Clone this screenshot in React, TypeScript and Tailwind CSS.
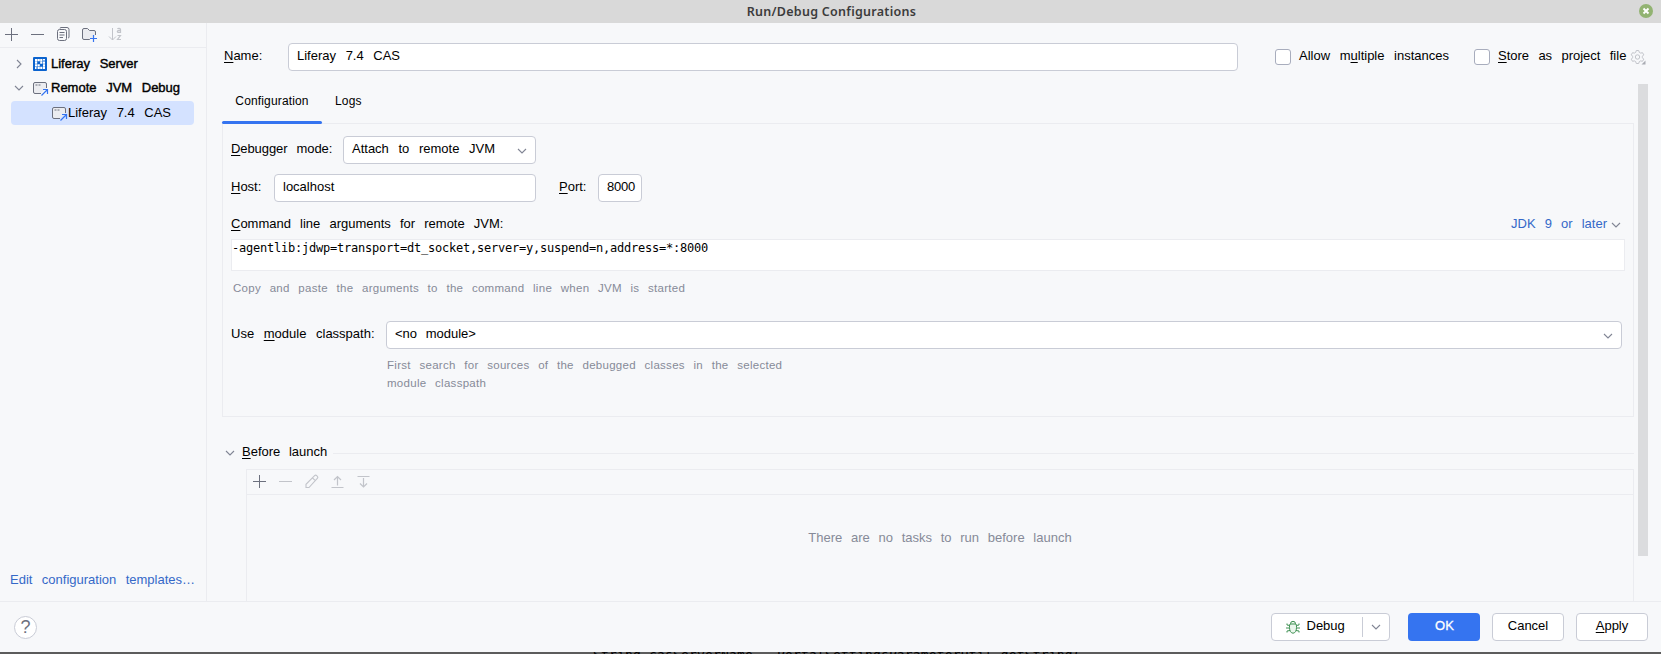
import React from "react";

const U = ({ children }: { children: React.ReactNode }) => (
  <span className="underline decoration-1 underline-offset-2">{children}</span>
);

type IconProps = { className?: string };

const Chevron = ({ className = "" }: IconProps) => (
  <svg viewBox="0 0 10 6" className={"h-[6px] w-[10px] shrink-0 fill-none stroke-[#818594] " + className}>
    <path d="M1 1 5 5 9 1" strokeWidth="1.1" />
  </svg>
);

const Plus = () => (
  <svg viewBox="0 0 16 16" className="size-4 shrink-0 overflow-visible stroke-[#6c707e]">
    <path d="M8.5 2v13M2 8.5h13" strokeWidth="1" />
  </svg>
);

const Minus = ({ className = "stroke-[#6c707e]" }: IconProps) => (
  <svg viewBox="0 0 16 16" className={"size-4 shrink-0 " + className}>
    <path d="M2 8.5h13" strokeWidth="1" />
  </svg>
);

const Copy = () => (
  <svg viewBox="0 0 16 16" className="size-4 shrink-0 fill-none stroke-[#6c707e]">
    <path d="M5 2.5A1 1 0 0 1 6 1.500h6a2 2 0 0 1 2 2v7.500a1 1 0 0 1-1 1" />
    <rect x="2.500" y="3.500" width="9" height="11" rx="2" />
    <path d="M4.500 6.500h5M4.500 9h5M4.500 11.500h3.500" />
  </svg>
);

const NewFolder = () => (
  <svg viewBox="0 0 17 16" className="h-4 w-[17px] shrink-0 fill-none overflow-visible">
    <path d="M9 13.500H3A1.500 1.500 0 0 1 1.500 12V4A1.500 1.500 0 0 1 3 2.500h3.500l2 2H13A1.500 1.500 0 0 1 14.500 6v3" fill="#ebecf0" stroke="#6c707e" />
    <path d="M9 13.500V10h5.500" stroke="#ebecf0" />
    <path d="M12.500 9v7M9 12.500h7" stroke="#3574f0" strokeWidth="1.200" />
  </svg>
);

const SortAZ = () => (
  <svg viewBox="0 0 16 16" className="size-4 shrink-0 fill-none stroke-[#c2c4ca]">
    <path d="M4.500 2v12M1 10.500 4.500 14 8 10.500" />
    <path d="M9.500 3c.6-1 3-1 3 .6V7M12.500 4.500c-2-.2-3.300.2-3.200 1.200.1 1.100 2.500 1 3.200-.2M9.500 9.500h3l-3 4h3.500" strokeWidth="1.200" />
  </svg>
);

const Remote = () => (
  <svg viewBox="0 0 17 16" className="h-4 w-[17px] shrink-0 fill-none overflow-visible">
    <path d="M8 13.500H3A1.500 1.500 0 0 1 1.500 12V4A1.500 1.500 0 0 1 3 2.500h10A1.500 1.500 0 0 1 14.500 4v4L8.500 13.500z" fill="#ebecf0" />
    <path d="M9 13.500H3A1.500 1.500 0 0 1 1.500 12V4A1.500 1.500 0 0 1 3 2.500h10A1.500 1.500 0 0 1 14.500 4v4" stroke="#6c707e" />
    <path d="M3.500 5h2M6.500 5h2" stroke="#6c707e" />
    <path d="M9.500 15.500l6-6M11 9.500h4.500V14" stroke="#3574f0" strokeWidth="1.200" />
  </svg>
);

const Liferay = () => (
  <svg viewBox="0 0 14 14" className="size-[14px] shrink-0">
    <rect width="14" height="14" rx="1" fill="#0b63ce" />
    <path
      fill="#fff"
      d="M2 2h2.200v2.200H2zM4.600 2h2.200v2.200H4.600zM7.200 2h2.200v2.200H7.200zM2 4.600h2.200v2.200H2zM2 7.200h2.200v2.200H2zM4.600 7.200h2.200v2.200H4.600zM7.200 4.600h2.200v2.200H7.200zM10 2h2v1.500h-2zM10 4.600h2v2.200h-2zM10 7.200h2v2.200h-2zM2 10h1.500v2H2zM4.600 10h2.200v2H4.600zM7.200 9.800h2.200V12H7.200zM10 9.800h2V12h-2z"
    />
  </svg>
);

const Gear = () => (
  <svg viewBox="0 0 16 16" className="size-4 shrink-0 fill-none stroke-[#c2c4ca]">
    <path d="M6.300 1.500h2.400l.6 1.900 1.300.7 1.900-.4 1.200 2.100-1.300 1.500v1.400l1.300 1.500-1.200 2.100-1.900-.4-1.300.7-.6 1.900H6.300l-.6-1.900-1.300-.7-1.900.4-1.200-2.100L2.600 8.700V7.300L1.300 5.800l1.200-2.100 1.900.4 1.300-.7z" />
    <circle cx="7.500" cy="8" r="2.200" />
    <path d="M15.500 11.500v4h-4z" fill="#aaacb3" stroke="none" />
  </svg>
);

const Pencil = () => (
  <svg viewBox="0 0 16 16" className="size-4 shrink-0 fill-none stroke-[#c2c4ca]">
    <path d="M3 14.500v-3.200l8.600-8.600a1.500 1.500 0 0 1 2.100 0l.6.600a1.500 1.500 0 0 1 0 2.100L6 14.500zM9.500 4.800l3 3" strokeWidth="1.100" />
  </svg>
);

const MoveUp = () => (
  <svg viewBox="0 0 16 16" className="size-4 shrink-0 fill-none stroke-[#c2c4ca]">
    <path d="M8.500 12.500V3.500M5 7 8.500 3.500 12 7M2.500 14.500h12" strokeWidth="1.200" />
  </svg>
);

const MoveDown = () => (
  <svg viewBox="0 0 16 16" className="size-4 shrink-0 fill-none stroke-[#c2c4ca]">
    <path d="M8.500 5v9M5 10.500 8.500 14l3.500-3.500M2.500 3.500h12" strokeWidth="1.200" />
  </svg>
);

const Bug = () => (
  <svg viewBox="0 0 16 16" className="size-4 shrink-0 fill-none stroke-[#3f9153]">
    <path d="M5.500 4.800a2.500 2.500 0 0 1 5 0M5 5h6a7 7 0 0 1 .5 3.500C11.500 12 10 14.200 8 14.200S4.500 12 4.500 8.500A7 7 0 0 1 5 5z" fill="#eaf6ec" />
    <path d="M4.500 9H1M11.500 9H15M4.700 6.500 2 6V4.500M11.300 6.500 14 6V4.500M5 11.500l-3 .5v1.500M11 11.500l3 .5v1.500" />
  </svg>
);

const field = "flex h-7 items-center rounded-[4px] border border-[#c9ccd6] bg-white";
const button = "flex h-7 items-center justify-center rounded-[4px] border border-[#c9ccd6] bg-white pb-[3px]";
const hint = "text-[11.5px] leading-[18px] tracking-[0.28px] text-[#868a98] [word-spacing:5.2px]";

function Sidebar() {
  return (
    <aside className="flex w-[207px] shrink-0 flex-col border-r border-[#ebecf0]">
      <div className="flex h-[25px] items-center gap-[10px] border-b border-[#ebecf0] pb-[2px] pl-[3px]">
        <Plus />
        <Minus />
        <Copy />
        <NewFolder />
        <SortAZ />
      </div>
      <div className="flex flex-col pt-[5px]">
        <div className="flex h-6 items-center pb-[2px] pl-[14px]">
          <Chevron className="-rotate-90" />
          <span className="ml-[9px] flex"><Liferay /></span>
          <span className="ml-[4px] [-webkit-text-stroke:0.4px_black] [word-spacing:6px]">Liferay Server</span>
        </div>
        <div className="flex h-6 items-center pb-[2px] pl-[14px]">
          <Chevron />
          <span className="ml-[8px] flex"><Remote /></span>
          <span className="ml-[2px] [-webkit-text-stroke:0.4px_black] [word-spacing:6px]">Remote JVM Debug</span>
        </div>
        <div className="ml-[11px] flex h-6 w-[183px] items-center rounded-[4px] bg-[#d4e2ff] pl-[40px]">
          <Remote />
          <span className="[word-spacing:6px]">Liferay 7.4 CAS</span>
        </div>
      </div>
      <a className="mt-auto mb-[12px] pl-[10px] text-[#3568c8] [word-spacing:5.8px]">Edit configuration templates…</a>
    </aside>
  );
}

function NameRow() {
  return (
    <div className="flex h-[61px] items-center pt-[6px] pl-[17px]">
      <label className="w-[64px] pb-[2px]"><U>N</U>ame:</label>
      <div className={field + " w-[950px] pb-[2px] pl-2 [word-spacing:6px]"}>Liferay 7.4 CAS</div>
      <span className="ml-[37px] size-4 rounded-[3px] border border-[#a8adbd] bg-white" />
      <span className="ml-[8px] w-[151px] pb-[2px] [word-spacing:6px]">Allow m<U>u</U>ltiple instances</span>
      <span className="ml-[24px] size-4 rounded-[3px] border border-[#a8adbd] bg-white" />
      <span className="ml-[8px] w-[129px] pb-[2px] [word-spacing:5.7px]"><U>S</U>tore as project file</span>
      <span className="ml-[3px] flex"><Gear /></span>
    </div>
  );
}

function ConfigurationPanel() {
  return (
    <section className="flex h-[294px] shrink-0 flex-col border border-[#ebecf0] pl-2">
      <div className="mt-[12px] flex h-7 items-center">
        <label className="w-[112px] pb-[2px] tracking-[-0.08px]"><U>D</U>ebugger mode:</label>
        <div className={field + " w-[193px] justify-between pr-[8px] pl-2"}>
          <span className="pb-[2px] [word-spacing:6px]">Attach to remote JVM</span>
          <Chevron className="mt-px" />
        </div>
      </div>
      <div className="mt-[10px] flex h-7 items-center">
        <label className="w-[43px] pb-[2px]"><U>H</U>ost:</label>
        <div className={field + " w-[262px] pb-[2px] pl-2"}>localhost</div>
        <label className="ml-[23px] w-[39px] pb-[2px]"><U>P</U>ort:</label>
        <div className={field + " w-[44px] pb-[2px] pl-2 tracking-[-0.2px]"}>8000</div>
      </div>
      <div className="mt-[10px] flex h-6 items-center justify-between pr-[12px]">
        <label><U>C</U>ommand line arguments for remote JVM:</label>
        <span className="flex items-center gap-[4px] text-[#3568c8]">JDK 9 or later<Chevron className="mt-[2px]" /></span>
      </div>
      <div className="mt-[3px] h-8 w-[1394px] border border-[#ebecf0] bg-white font-['DejaVu_Sans_Mono',monospace] text-[12px] leading-[17px] tracking-[-0.224px]">
        -agentlib:jdwp=transport=dt_socket,server=y,suspend=n,address=*:8000
      </div>
      <p className={hint + " mt-[8px] pl-[2px]"}>
        Copy and paste the arguments to the command line when JVM is started
      </p>
      <div className="mt-[24px] flex h-7 items-center">
        <label className="w-[155px] pb-[2px] [word-spacing:6px]">Use <U>m</U>odule classpath:</label>
        <div className={field + " w-[1236px] justify-between pr-[8px] pl-2"}>
          <span className="pb-[2px] [word-spacing:5px]">&lt;no module&gt;</span>
          <Chevron className="mt-px" />
        </div>
      </div>
      <p className={hint + " mt-[7px] ml-[156px] w-[410px]"}>
        First search for sources of the debugged classes in the selected<br />module classpath
      </p>
    </section>
  );
}

function BeforeLaunch() {
  return (
    <section className="mt-[24px] flex min-h-0 grow flex-col">
      <div className="flex h-6 shrink-0 items-center pl-[3px]">
        <Chevron />
        <span className="ml-[7px] pb-[2px] [word-spacing:5px]"><U>B</U>efore launch</span>
        <span className="ml-[6px] h-px grow bg-[#ebecf0]" />
      </div>
      <div className="mt-[4px] ml-[24px] flex grow flex-col border border-b-0 border-[#ebecf0]">
        <div className="flex h-[25px] items-center gap-[10px] border-b border-[#ebecf0] pb-[2px] pl-[4px]">
          <Plus />
          <Minus className="stroke-[#c2c4ca]" />
          <Pencil />
          <MoveUp />
          <MoveDown />
        </div>
        <p className="pt-[34px] text-center text-[#868a98] [word-spacing:5.1px]">There are no tasks to run before launch</p>
      </div>
    </section>
  );
}

export default function App() {
  return (
    <div className="flex h-[654px] w-[1661px] flex-col overflow-hidden bg-[#f7f8fa] font-['Liberation_Sans',Arial,sans-serif] text-[13px] leading-[18px] whitespace-nowrap text-black [word-spacing:5.5px]">
      <header className="grid h-[23px] shrink-0 grid-cols-[1fr_auto_1fr] items-center bg-[#d9d9d9] [word-spacing:0px]">
        <span />
        <h1 className="pt-px pl-[2px] font-['Noto_Sans',sans-serif] text-[12.5px] font-semibold tracking-[0.27px] text-[#3c3c3c]">Run/Debug Configurations</h1>
        <svg viewBox="0 0 14 14" className="mr-2 mb-px size-[14px] justify-self-end">
          <circle cx="7" cy="7" r="7" fill="#92b372" />
          <path d="M4.500 4.500l5 5M9.500 4.500l-5 5" stroke="#fff" strokeWidth="1.900" />
        </svg>
      </header>
      <div className="flex h-[578px] shrink-0">
        <Sidebar />
        <main className="flex grow flex-col">
          <NameRow />
          <div className="flex min-h-0 grow pl-[15px]">
            <div className="flex w-[1412px] flex-col">
              <nav className="flex h-[39px] shrink-0 text-[12px] tracking-[0.15px]">
                <span className="relative z-10 -mb-px flex w-[100px] flex-col items-center justify-between pt-[8px]">
                  Configuration
                  <span className="h-[3px] w-full rounded-full bg-[#3574f0]" />
                </span>
                <span className="pt-[8px] pl-[13px]">Logs</span>
              </nav>
              <ConfigurationPanel />
              <BeforeLaunch />
            </div>
            <div className="ml-[4px] h-[472px] w-[10px] bg-[#dbdcde]" />
          </div>
        </main>
      </div>
      <footer className="flex h-[51px] shrink-0 items-center border-t border-[#ebecf0] pr-[13px] pl-[14px]">
        <span className="flex size-[23px] items-center justify-center rounded-full border border-[#c9ccd6] bg-white text-[18px] text-[#6c707e]">?</span>
        <div className={button + " ml-auto w-[119px] pl-[4px]"}>
          <span className="flex pt-[3px]"><Bug /></span>
          <span className="ml-[6px] w-[55px]">Debug</span>
          <span className="mt-[3px] h-5 w-px bg-[#c9ccd6]" />
          <span className="ml-[8px] flex pt-[3px]"><Chevron /></span>
        </div>
        <div className="ml-[18px] flex h-7 w-[72px] items-center justify-center rounded-[4px] bg-[#3574f0] pb-[3px] pl-px text-white [-webkit-text-stroke:0.3px_white]">OK</div>
        <div className={button + " ml-[12px] w-[72px]"}>Cancel</div>
        <div className={button + " ml-[12px] w-[72px]"}><span><U>A</U>pply</span></div>
      </footer>
      <div className="h-[2px] shrink-0 overflow-hidden bg-[#5c5c5c] pl-[593px]">
        <div className="-mt-[5px] font-['DejaVu_Sans_Mono',monospace] leading-[15px] tracking-[0.17px] [word-spacing:0px]">
          String casServerName = PortalSettingsParameterUtil.getString(
        </div>
      </div>
    </div>
  );
}
